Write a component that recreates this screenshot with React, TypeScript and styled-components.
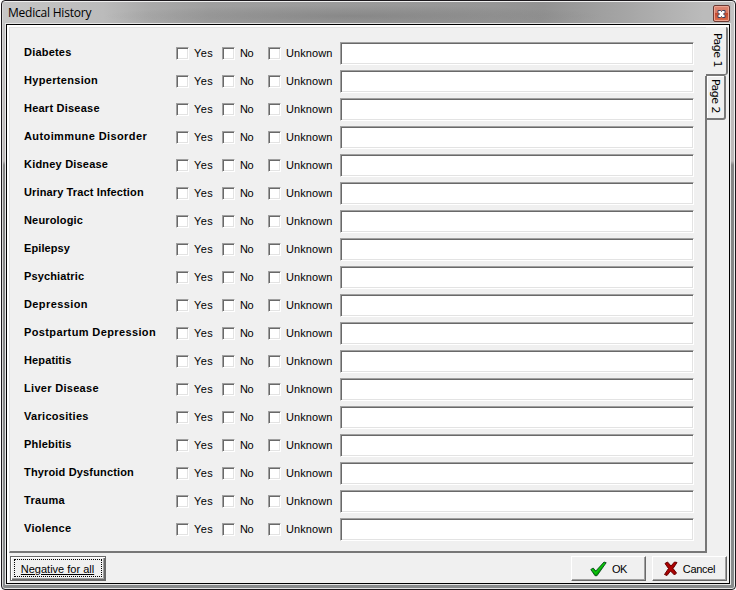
import React from "react";
import styled, { createGlobalStyle } from "styled-components";

const Global = createGlobalStyle`
  * { box-sizing: border-box; }
  body { margin: 0; background: #fff; overflow: hidden; }
`;

const Shell = styled.div`
  width: 736px;
  height: 590px;
  padding-left: 1px;
  background: #fff;
  font: 11px/14px "Liberation Sans", Arial, sans-serif;
  color: #000;
`;

const Frame = styled.div`
  display: flex;
  flex-direction: column;
  height: 590px;
  border: 1px solid #1b181c;
  border-radius: 4px;
  padding: 0 5px 5px 4px;
  background: linear-gradient(180deg, #c4c4c4 0, #bcb8b8 160px, #858585 164px, #888b8c 100%);
  box-shadow: inset 0 1px #eee, inset 1px 0 #d8d8d8, inset -1px 0 #eee, inset 0 -1px #e4e4e4;
`;

const TitleBar = styled.header`
  display: flex;
  justify-content: space-between;
  flex: 0 0 22px;
  margin: 1px -1px 0 -3px;
  padding: 3px 1px 0 5px;
  background:
    radial-gradient(ellipse 250px 11px at 350px 14px, #70707070, transparent),
    linear-gradient(90deg, #c6c6c6 0, #bbb 100px, #aaa 145px, #9f9f9f 205px, #969696 490px, #929292 540px, #a6a6a6 625px, #bbb 700px);
`;

const Title = styled.h1`
  margin: 0;
  font: 12px/16px "Open Sans", "Noto Sans", sans-serif;
  letter-spacing: -0.22px;
`;

const Close = styled.button`
  display: grid;
  place-items: center;
  width: 17px;
  height: 17px;
  padding: 0;
  border: 1px solid #6a3933;
  border-radius: 2px;
  box-shadow: inset 0 0 0 1px #eca493;
  background: linear-gradient(#dd8975 0, #d87560 45%, #c3492f 50%, #dc6d4d 100%);
`;

const Client = styled.main`
  flex: 1;
  min-height: 0;
  border: 1px solid #000;
  outline: 1px solid #e7e7e7;
  padding: 2px 2px 3px 2px;
  background: #f0f0f0;
  box-shadow: inset 0 2px #fff, inset 2px 0 #fff;
`;

const Notebook = styled.section`
  display: flex;
  align-items: flex-start;
  height: 526px;
`;

const Sheet = styled.div`
  flex: 0 0 698px;
  height: 526px;
  padding: 14px 0 0 14px;
  border: solid #e2e2e2;
  border-width: 1px 0 2px 1px;
  border-bottom-color: #777;
  background: linear-gradient(#777, #777) 695px 48px / 2px 480px no-repeat #f0f0f0;
`;

const Row = styled.div`
  display: grid;
  grid-template-columns: 152px 46px 46px 72px 354px;
  height: 28px;
  align-items: start;
  padding-top: 3px;
`;

const Label = styled.span<{ $spacing: number }>`
  font-weight: bold;
  letter-spacing: ${(p) => p.$spacing}px;
  white-space: nowrap;
`;

const Option = styled.label`
  display: flex;
  gap: 5px;
  padding-top: 2px;
`;

const Box = styled.input.attrs({ type: "checkbox" })`
  appearance: none;
  width: 13px;
  height: 13px;
  margin: 0;
  background: #fff;
  border: 1px solid #a0a0a0;
  border-right-color: #fff;
  border-bottom-color: #fff;
  box-shadow: inset 1px 1px #696969, inset -1px -1px #e3e3e3;
`;

const OptionText = styled.span<{ $spacing: number }>`
  line-height: 13px;
  letter-spacing: ${(p) => p.$spacing}px;
`;

const Field = styled.input`
  width: 354px;
  height: 23px;
  margin: -3px 0 0;
  padding: 2px 4px;
  border: 1px solid #a0a0a0;
  border-right-color: #fff;
  border-bottom-color: #fff;
  box-shadow: inset 1px 1px #696969, inset -1px -1px #e3e3e3;
  background: #fff;
  font: inherit;
`;

const Tabs = styled.nav`
  display: flex;
  flex-direction: column;
  margin-left: -1px;
`;

const Tab = styled.button<{ $active?: boolean }>`
  writing-mode: vertical-rl;
  width: ${(p) => (p.$active ? 22 : 20)}px;
  height: ${(p) => (p.$active ? 48 : 45)}px;
  padding: ${(p) => (p.$active ? "6px 0 0 2px" : "3px 1px 0 0")};
  margin: 0;
  text-align: left;
  border: solid #777;
  border-width: ${(p) => (p.$active ? "0 2px 1px 0" : "1px 2px 2px 1px")};
  border-radius: 0 2px 3px 0;
  background: #f0f0f0;
  box-shadow: ${(p) => (p.$active ? "none" : "inset 1px 1px #fff")};
  font: 11px/14px "DejaVu Sans", sans-serif;
  letter-spacing: -0.55px;
  color: #000;
`;

const Footer = styled.footer`
  display: flex;
  align-items: flex-start;
  padding: 3px 0 0 1px;
`;

const Button = styled.button<{ $width: number; $default?: boolean }>`
  display: flex;
  align-items: center;
  justify-content: center;
  gap: 5px;
  width: ${(p) => p.$width}px;
  height: 25px;
  padding: 0;
  font: inherit;
  color: #000;
  background: #f0f0f0;
  border: 1px solid #fff;
  border-right-color: #696969;
  border-bottom-color: #696969;
  box-shadow: inset -1px -1px #a0a0a0;
  ${(p) =>
    p.$default &&
    `border: 1px solid #696969; box-shadow: inset 1px 1px #fff, inset -1px -1px #696969, inset -2px -2px #a0a0a0;`}
`;

const FocusRing = styled.span`
  display: block;
  width: 88px;
  height: 18px;
  margin: -1px 0 0 -1px;
  border: 1px dotted #000;
  text-align: center;
  line-height: 18px;
  text-decoration: underline;
`;

const Actions = styled.div`
  display: flex;
  gap: 6px;
  margin-left: auto;
`;

const Caption = styled.span<{ $spacing: number }>`
  letter-spacing: ${(p) => p.$spacing}px;
  padding-top: 1px;
`;

const conditions: [string, number][] = [
  ["Diabetes", 0.2],
  ["Hypertension", 0.32],
  ["Heart Disease", 0.23],
  ["Autoimmune Disorder", 0.4],
  ["Kidney Disease", 0.2],
  ["Urinary Tract Infection", 0.13],
  ["Neurologic", 0.16],
  ["Epilepsy", 0.1],
  ["Psychiatric", 0.13],
  ["Depression", 0.4],
  ["Postpartum Depression", 0.38],
  ["Hepatitis", 0.12],
  ["Liver Disease", 0.3],
  ["Varicosities", 0.3],
  ["Phlebitis", 0.2],
  ["Thyroid Dysfunction", 0.16],
  ["Trauma", 0.3],
  ["Violence", 0.3],
];

const answers: [string, number][] = [
  ["Yes", 0.4],
  ["No", -0.4],
  ["Unknown", 0.1],
];

const CloseIcon = () => (
  <svg width="9" height="8" viewBox="0 0 9 8">
    <path d="M1 .5h2.5l1 1 1-1H8v2L6.5 4 8 5.5v2H5.5l-1-1-1 1H1v-2L2.5 4 1 2.5z" fill="#fff" stroke="#3c4260" strokeWidth="1" />
  </svg>
);

const CheckIcon = () => (
  <svg width="17" height="16" viewBox="0 0 17 16">
    <path d="M.8 8.5 3.2 7l2.6 3L14 1l2.2.7L7 14.7H5z" fill="#00a800" stroke="#003c16" strokeWidth=".8" />
    <path d="M2 8.2l3.6 4L14.8 2" fill="none" stroke="#10c010" strokeWidth="1.3" />
  </svg>
);

const CrossIcon = () => (
  <svg width="14" height="15" viewBox="0 0 14 15">
    <path d="M1 2.5 3.5 1 7 5l3.5-4L13 1.5 9 7.5l3.5 4.5-2 2L6.5 10l-3.5 4.5-2.5-1 4-6z" fill="#9c0000" stroke="#6a0000" strokeWidth="1" />
    <path d="M2.5 2.5 10.5 12M11 2 3 12" stroke="#b00404" strokeWidth="1.4" />
  </svg>
);

export default function App() {
  return (
    <Shell>
      <Global />
      <Frame>
        <TitleBar>
          <Title>Medical History</Title>
          <Close aria-label="Close"><CloseIcon /></Close>
        </TitleBar>
        <Client>
          <Notebook>
            <Sheet>
              {conditions.map(([name, spacing]) => (
                <Row key={name}>
                  <Label $spacing={spacing}>{name}</Label>
                  {answers.map(([text, s]) => (
                    <Option key={text}>
                      <Box />
                      <OptionText $spacing={s}>{text}</OptionText>
                    </Option>
                  ))}
                  <Field aria-label={name} />
                </Row>
              ))}
            </Sheet>
            <Tabs>
              <Tab $active>Page 1</Tab>
              <Tab>Page 2</Tab>
            </Tabs>
          </Notebook>
          <Footer>
            <Button $width={96} $default><FocusRing>Negative for all</FocusRing></Button>
            <Actions>
              <Button $width={75}><CheckIcon /><Caption $spacing={-0.5}>OK</Caption></Button>
              <Button $width={75}><CrossIcon /><Caption $spacing={-0.3}>Cancel</Caption></Button>
            </Actions>
          </Footer>
        </Client>
      </Frame>
    </Shell>
  );
}
